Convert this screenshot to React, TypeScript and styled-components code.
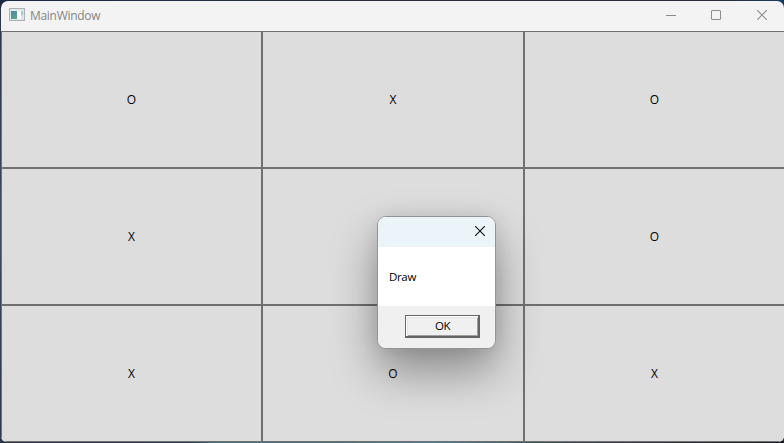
import React from "react";
import styled, { createGlobalStyle } from "styled-components";

const GlobalStyle = createGlobalStyle`
  * { box-sizing: border-box; }
  body {
    margin: 0;
    overflow: hidden;
    font-family: "Open Sans", "Noto Sans", sans-serif;
    font-size: 12px;
  }
`;

const Desktop = styled.div`
  position: relative;
  width: 784px;
  height: 443px;
  padding: 1px 0 1px 1px;
  overflow: hidden;
  background:
    linear-gradient(90deg, #26354a 0, #2c3a4c 190px, #3c7385 215px, #477078 330px, #478792 430px, #3f5c66 520px, #343e49 620px, #171923 784px) 0 100% / 100% 2px no-repeat,
    linear-gradient(90deg, #1c2a42, #292d3b 350px, #292c39 720px, #173b60) 0 0 / 100% 8px no-repeat,
    linear-gradient(#2a384c, #3a4c5f 50%, #2c3b50);
`;

const Window = styled.div`
  width: 783px;
  height: 441px;
  display: flex;
  flex-direction: column;
  border-radius: 7px 7px 6px 6px;
  overflow: hidden;
  background: #f3f3f3;
`;

const TitleBar = styled.header`
  flex: 0 0 30px;
  display: flex;
  align-items: center;
  padding-left: 8px;
  color: #868686;
`;

const AppIcon = styled.svg`
  width: 16px;
  height: 14px;
  margin-top: -2px;
`;

const Title = styled.span`
  flex: 1;
  margin-left: 5px;
  line-height: 16px;
  letter-spacing: -0.3px;
`;

const Controls = styled.div`
  display: flex;
  height: 30px;
`;

const Control = styled.button`
  width: 46px;
  height: 28px;
  padding: 0;
  border: 0;
  background: none;
  color: #8c8c8c;
  display: grid;
  place-items: center;
  &:nth-child(1) { padding-left: 1px; }
  &:nth-child(2) { width: 45px; }
  &:nth-child(3) { padding-left: 2px; }
`;

const Board = styled.main`
  display: grid;
  grid-template-columns: 261px 262px 261px;
  grid-template-rows: repeat(3, 137px);
`;

const Cell = styled.button`
  padding: 0 0 1px;
  border: 1px solid #707070;
  background: #dddddd;
  color: #000;
  font: inherit;
`;

const Dialog = styled.section`
  position: absolute;
  left: 377px;
  top: 216px;
  width: 119px;
  height: 133px;
  display: flex;
  flex-direction: column;
  border: 1px solid #929496;
  border-radius: 9px;
  background: #fff;
  box-shadow: 0 22px 46px rgba(0, 0, 0, 0.38), 0 0 18px rgba(0, 0, 0, 0.08);
`;

const DialogTitle = styled.header`
  flex: 0 0 30px;
  display: flex;
  justify-content: flex-end;
  padding: 9px 10px 0 0;
  border-radius: 8px 8px 0 0;
  background: #ebf4f8;
  color: #111;
`;

const Message = styled.p`
  flex: 1;
  margin: 0;
  padding: 22px 0 0 11px;
  color: #000;
  font-size: 11.5px;
  line-height: 16px;
  letter-spacing: -0.35px;
`;

const DialogFooter = styled.footer`
  flex: 0 0 42px;
  display: flex;
  justify-content: flex-end;
  padding: 9px 15px 0 0;
  border-radius: 0 0 8px 8px;
  background: #f0f0f0;
`;

const OkButton = styled.button`
  width: 75px;
  height: 23px;
  padding: 0 0 1px 1px;
  border: 1px solid #646464;
  border-right-width: 2px;
  border-bottom-width: 2px;
  background: #f0f0f0;
  box-shadow: inset 1px 1px #fff, inset 2px 2px #e3e3e3, inset -1px -1px #a0a0a0;
  color: #000;
  font: inherit;
  font-size: 11.5px;
  line-height: 16px;
  letter-spacing: -0.4px;
`;

const marks = ["O", "X", "O", "X", "", "O", "X", "O", "X"];

export default function App() {
  return (
    <>
      <GlobalStyle />
      <Desktop>
        <Window>
          <TitleBar>
            <AppIcon viewBox="0 0 16 14" shapeRendering="crispEdges">
              <defs>
                <linearGradient id="pane" x1="0" y1="0" x2="1" y2="1">
                  <stop offset="0" stopColor="#4e85a8" />
                  <stop offset="1" stopColor="#55a98a" />
                </linearGradient>
              </defs>
              <path d="M0 0h16v13H0z" fill="#acb0b4" />
              <path d="M1 1h14v11H1z" fill="#e4e7ea" />
              <path d="M2 3h6v8H2z" fill="url(#pane)" />
              <path d="M8 3h4v8H8z" fill="#fff" />
              <path d="M12 3h2v4h-2z" fill="#a9c8c4" />
              <path d="M12 7h2v4h-2z" fill="#dfe1ec" />
            </AppIcon>
            <Title>MainWindow</Title>
            <Controls>
              <Control aria-label="Minimize">
                <svg width="10" height="10" stroke="currentColor"><path d="M0 5.5h10" /></svg>
              </Control>
              <Control aria-label="Maximize">
                <svg width="10" height="10" fill="none" stroke="currentColor"><rect x=".5" y=".5" width="9" height="9" rx=".5" /></svg>
              </Control>
              <Control aria-label="Close">
                <svg width="10" height="10" stroke="currentColor" strokeWidth="1.1"><path d="M0 0l10 10M10 0L0 10" /></svg>
              </Control>
            </Controls>
          </TitleBar>
          <Board>
            {marks.map((mark, i) => <Cell key={i}>{mark}</Cell>)}
          </Board>
        </Window>
        <Dialog role="dialog">
          <DialogTitle>
            <svg width="10" height="10" stroke="currentColor" strokeWidth="1.1"><path d="M0 0l10 10M10 0L0 10" /></svg>
          </DialogTitle>
          <Message>Draw</Message>
          <DialogFooter>
            <OkButton>OK</OkButton>
          </DialogFooter>
        </Dialog>
      </Desktop>
    </>
  );
}
